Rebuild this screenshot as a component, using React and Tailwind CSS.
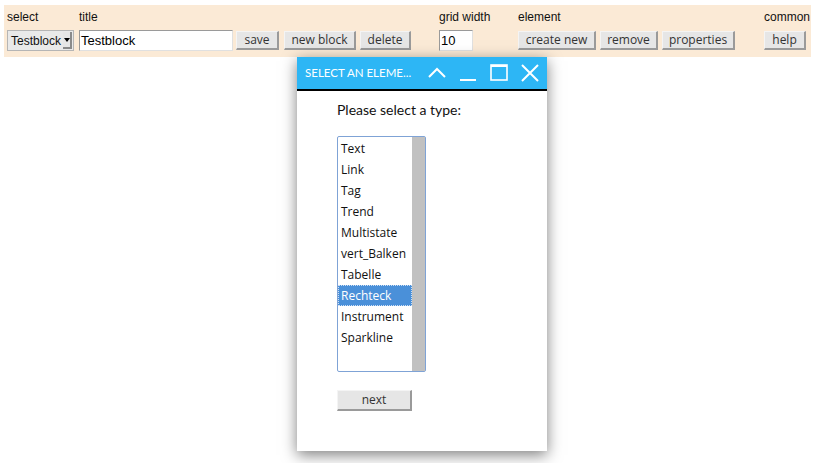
import React from 'react';

const items = ['Text', 'Link', 'Tag', 'Trend', 'Multistate', 'vert_Balken', 'Tabelle', 'Rechteck', 'Instrument', 'Sparkline'];

function Btn({ children, className = '' }) {
  return (
    <button
      className={`h-[19px] px-0 whitespace-nowrap bg-[#e6e6e6] border-t border-l border-t-[#f4f4f4] border-l-[#f4f4f4] border-r-2 border-b-2 border-r-[#9a9a9a] border-b-[#9a9a9a] text-[12px] leading-none text-[#333] font-['Open_Sans',sans-serif] ${className}`}
    >
      {children}
    </button>
  );
}

function Label({ children }) {
  return <div className="h-[20px] text-[12px] leading-[20px] text-[#111] font-['Liberation_Sans',Arial,sans-serif]">{children}</div>;
}

export default function App() {
  return (
    <div className="relative w-[821px] h-[463px] bg-white overflow-hidden">
      <div className="mt-[5px] ml-[4px] w-[807px] h-[52px] bg-[#fbead6] flex pl-[3px] pt-[2px]">
        <div className="w-[72px]">
          <Label>select</Label>
          <div className="mt-[3px] w-[67px] h-[21px] flex items-center bg-[#e9e9e9] border border-[#b5b5b5]">
            <span className="flex-1 pl-[3px] text-[12px] text-[#111] font-['Liberation_Sans',Arial,sans-serif]">Testblock</span>
            <span className="w-[9px] h-[17px] mr-[1px] flex items-center justify-center bg-[#e6e6e6] border-r-2 border-b-2 border-[#8a8a8a]">
              <span className="w-0 h-0 border-l-[3px] border-r-[3px] border-t-[4px] border-l-transparent border-r-transparent border-t-black" />
            </span>
          </div>
        </div>
        <div className="w-[360px]">
          <Label>title</Label>
          <div className="mt-[3px] flex items-center">
            <div className="w-[154px] h-[21px] bg-white border border-t-[#9a9a9a] border-l-[#9a9a9a] border-r-[#e0e0e0] border-b-[#e0e0e0] pl-[1px] text-[13px] leading-[19px] text-black font-['Liberation_Sans',Arial,sans-serif]">Testblock</div>
            <Btn className="ml-[3px] w-[43px]">save</Btn>
            <Btn className="ml-[5px] w-[72px]">new block</Btn>
            <Btn className="ml-[4px] w-[51px]">delete</Btn>
          </div>
        </div>
        <div className="w-[79px]">
          <Label>grid width</Label>
          <div className="mt-[3px] w-[34px] h-[21px] bg-white border border-t-[#9a9a9a] border-l-[#9a9a9a] border-r-[#e0e0e0] border-b-[#e0e0e0] pl-[1px] text-[13px] leading-[19px] text-black font-['Liberation_Sans',Arial,sans-serif]">10</div>
        </div>
        <div className="w-[246px]">
          <Label>element</Label>
          <div className="mt-[3px] h-[21px] flex items-center">
            <Btn className="w-[78px]">create new</Btn>
            <Btn className="ml-[4px] w-[58px]">remove</Btn>
            <Btn className="ml-[4px] w-[73px]">properties</Btn>
          </div>
        </div>
        <div>
          <Label>common</Label>
          <div className="mt-[3px] h-[21px] flex items-center">
            <Btn className="w-[42px]">help</Btn>
          </div>
        </div>
      </div>

      <div className="absolute left-[297px] top-[57px] w-[250px] h-[394px] bg-white shadow-[0_4px_14px_rgba(0,0,0,0.5)] flex flex-col">
        <div className="h-[34px] bg-[#2db6f5] border-b-2 border-black flex items-center pl-[8px] pr-[7px]">
          <span className="flex-1 text-[11.5px] text-white font-['Lato',sans-serif]">SELECT AN ELEME...</span>
          <svg width="20" height="20" viewBox="0 0 20 20" className="mr-[12px]">
            <path d="M2 14 L10 6 L18 14" fill="none" stroke="white" strokeWidth="2" />
          </svg>
          <svg width="18" height="20" viewBox="0 0 18 20" className="mr-[13px]">
            <path d="M1 17 H17" fill="none" stroke="white" strokeWidth="2" />
          </svg>
          <svg width="18" height="20" viewBox="0 0 18 20" className="mr-[12px]">
            <rect x="1" y="2" width="16" height="15" fill="none" stroke="white" strokeWidth="1.6" />
            <path d="M1 3 H17" stroke="white" strokeWidth="2" />
          </svg>
          <svg width="20" height="20" viewBox="0 0 20 20">
            <path d="M2 2 L18 18 M18 2 L2 18" fill="none" stroke="white" strokeWidth="2" />
          </svg>
        </div>
        <div className="pl-[40px] pt-[9px]">
          <div className="text-[14px] leading-[20px] text-[#111] font-['Lato',sans-serif]">Please select a type:</div>
          <div className="mt-[16px] w-[89px] h-[236px] border border-[#7fa3d6] rounded-[2px] flex">
            <div className="flex-1 pt-[1px]">
              {items.map((it) => (
                <div
                  key={it}
                  className={`h-[21px] pl-[3px] text-[12px] leading-[21px] font-['Open_Sans',sans-serif] ${
                    it === 'Rechteck' ? 'bg-[#4a90d9] text-white outline-1 outline-dotted outline-offset-[-1px] outline-[#cfe0f5]' : 'text-[#111]'
                  }`}
                >
                  {it}
                </div>
              ))}
            </div>
            <div className="w-[13px] bg-[#c1c1c1]" />
          </div>
          <Btn className="mt-[18px] w-[75px] h-[21px] text-[12px]">next</Btn>
        </div>
      </div>
    </div>
  );
}
